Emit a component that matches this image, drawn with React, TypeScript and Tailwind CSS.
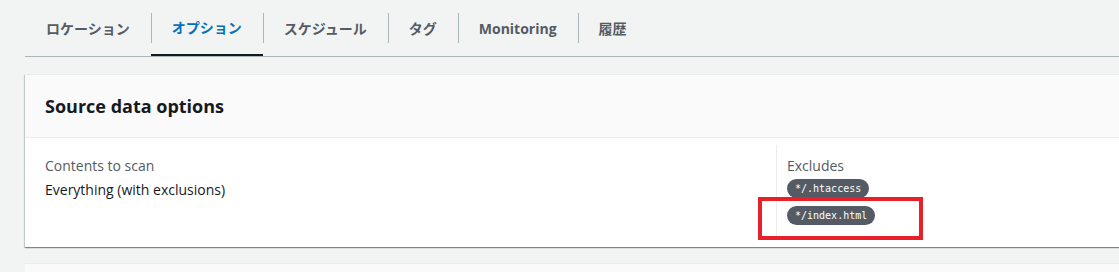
const tabs = ['ロケーション', 'オプション', 'スケジュール', 'タグ', 'Monitoring', '履歴']

function Tab({ label, active, first }: { label: string; active?: boolean; first?: boolean }) {
  return (
    <div className="relative flex h-[56px] items-center">
      {!first && <span className="absolute left-0 top-[13px] h-[30px] w-px bg-[#aab7b8]" />}
      <div
        className={
          'flex h-full items-center px-[21px] text-[14px] font-bold ' +
          (active ? 'text-[#0073bb] border-b-[2px] border-[#16191f]' : 'text-[#545b64]')
        }
      >
        <span className="pt-[1px]">{label}</span>
      </div>
    </div>
  )
}

function Badge({ children }: { children: React.ReactNode }) {
  return (
    <span className="flex h-[19px] w-fit items-center rounded-full bg-[#545b64] px-[8px] font-['DejaVu_Sans_Mono',monospace] text-[10px] leading-none text-white">
      {children}
    </span>
  )
}

export default function App() {
  return (
    <div className="h-[272px] w-[1119px] overflow-hidden bg-[#f2f3f3] font-['Open_Sans','Noto_Sans_CJK_JP',sans-serif]">
      <div className="ml-[25px] flex h-[57px] border-b border-[#aab7b8]">
        {tabs.map((t, i) => (
          <Tab key={t} label={t} active={i === 1} first={i === 0} />
        ))}
      </div>

      <div className="ml-[25px] mt-[17px] w-[1120px] border-t border-[#eaeded] bg-white shadow-[0_1px_1px_0_rgba(0,28,36,0.3),1px_1px_1px_0_rgba(0,28,36,0.15),-1px_1px_1px_0_rgba(0,28,36,0.15)]">
        <div className="flex h-[63px] items-center border-b border-[#eaeded] bg-[#fafafa] px-[20px]">
          <h2 className="text-[18px] font-bold text-[#16191f]">Source data options</h2>
        </div>
        <div className="grid grid-cols-[751px_1fr] pb-[7px] pt-[7px]">
          <div className="pl-[20px] pt-[10px]">
            <div className="text-[14px] leading-[22px] text-[#545b64]">Contents to scan</div>
            <div className="mt-[2px] text-[14px] leading-[22px] text-[#16191f]">Everything (with exclusions)</div>
          </div>
          <div className="border-l border-[#eaeded] pb-[15px] pl-[10px] pt-[10px]">
            <div className="text-[14px] leading-[22px] text-[#545b64]">Excludes</div>
            <div className="mt-[2px] flex flex-col items-start gap-[8px]">
              <Badge>*/.htaccess</Badge>
              <div className="relative">
                <Badge>*/index.html</Badge>
                <span className="pointer-events-none absolute left-[-29px] top-[-9px] h-[43px] w-[165px] border-[4px] border-[#e8202a]" />
              </div>
            </div>
          </div>
        </div>
      </div>

      <div className="ml-[25px] mt-[16px] h-[40px] w-[1120px] border-t border-[#eaeded] bg-[#fafafa]" />
    </div>
  )
}
